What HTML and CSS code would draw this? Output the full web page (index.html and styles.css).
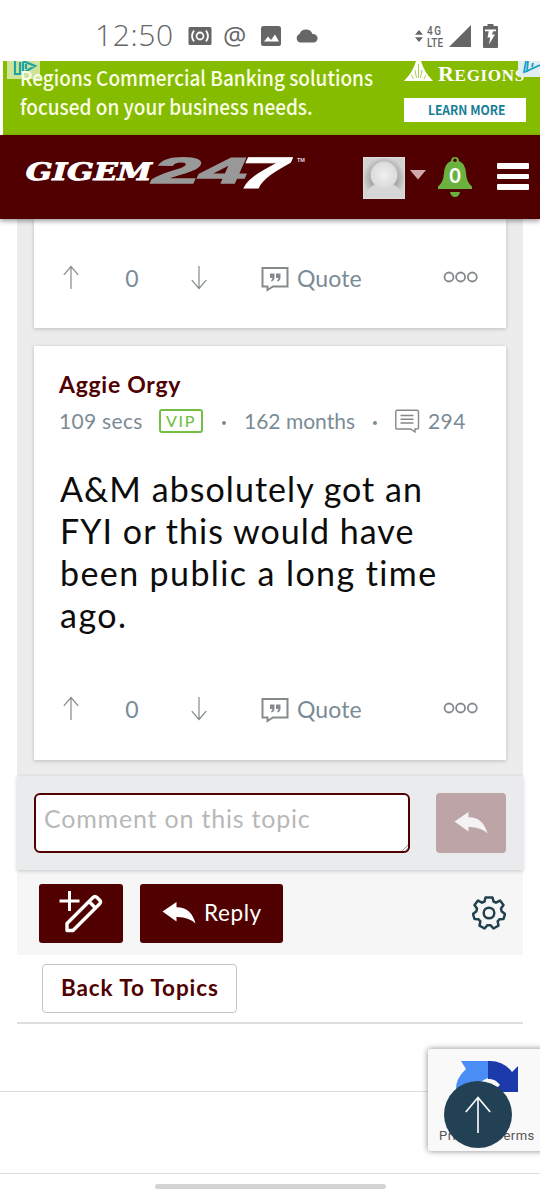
FILE: index.html
```html
<!DOCTYPE html>
<html lang="en">
<head>
<meta charset="utf-8">
<title>Gigem247</title>
<link rel="stylesheet" href="styles.css">
</head>
<body>
<svg class="defs" width="0" height="0">
  <symbol id="up" viewBox="0 0 16 25"><path d="M8 24V1.500M.8 9.800L8 1.500l7.200 8.300" fill="none" stroke="currentColor" stroke-width="1.200"/></symbol>
  <symbol id="quote" viewBox="0 0 28 26"><path d="M1.500 2h25v18.500H12L6.500 24v-3.500h-5z" fill="none" stroke="currentColor" stroke-width="2"/><path d="M9 7.500h4.500v4q0 3.500-3.300 4v-1.500q1.300-.7 1.200-2H9zM15 7.500h4.500v4q0 3.500-3.300 4v-1.500q1.300-.7 1.200-2H15z" fill="currentColor"/></symbol>
  <symbol id="more" viewBox="0 0 36 12"><g fill="none" stroke="currentColor" stroke-width="1.800"><circle cx="6" cy="6" r="4.500"/><circle cx="17.600" cy="6" r="4.500"/><circle cx="29.300" cy="6" r="4.500"/></g></symbol>
  <symbol id="reply" viewBox="0 0 34 24"><path d="M.5 10.500L14.500 1v5.300Q29 6 33.500 22.500 26 15.500 14.500 16v4.500z" fill="currentColor"/></symbol>
</svg>

<header class="status">
  <span class="time">12:50</span>
  <svg class="i-cast" viewBox="0 0 24 18" width="24" height="18"><rect x=".5" width="23" height="18" rx="1.500" fill="#666"/><g fill="none" stroke="#fff" stroke-width="1.800"><circle cx="12" cy="9" r="3.500"/><path d="M6 3.500q-4 5.500 0 11M18 3.500q4 5.500 0 11"/></g></svg>
  <span class="at">@</span>
  <svg class="i-pic" viewBox="0 0 20 20" width="20" height="20"><rect width="20" height="20" rx="2.500" fill="#666"/><path d="M3 15.500l4-5 3 3.500 4-5.500 4 7z" fill="#fff"/></svg>
  <svg class="i-cloud" viewBox="0 0 24 14" width="24" height="14"><path d="M5 13.500a4.500 4.500 0 0 1-.5-8.500A7 7 0 0 1 17.500 5a4.300 4.300 0 0 1 1.500 8.500z" fill="#666"/></svg>
  <span class="grow"></span>
  <svg class="i-ud" viewBox="0 0 8 12" width="8" height="12"><path d="M0 4.700L4 0l4 4.700zM0 7.300h8L4 12z" fill="#666"/></svg>
  <span class="lte"><span class="gen">4G</span><span>LTE</span></span>
  <svg class="i-sig" viewBox="0 0 22 22" width="22" height="22"><path d="M0 22L22 0v22z" fill="#666"/></svg>
  <svg class="i-bat" viewBox="0 0 15 24" width="15" height="24"><path d="M4.500 0h6v2H14q1 0 1 1v20q0 1-1 1H1q-1 0-1-1V3q0-1 1-1h3.500z" fill="#666"/><path d="M2 5.500h11v1.700H2zM6 6h4.500L9 10.500h3L6 20.500 7.200 13.500H4.500z" fill="#fff"/></svg>
</header>

<section class="ad">
  <div class="ad-copy">
    <svg class="adchoice left" viewBox="0 0 33 18" width="33" height="18"><path d="M0 0h33v18H0z" fill="#fff" opacity=".6"/><path d="M8 0v13h5V1M16 0l12 5-12 7V1M19 3v5" fill="none" stroke="#20a3a5" stroke-width="2.200"/></svg>
    <div class="ad-line">Regions Commercial Banking solutions</div>
    <div class="ad-line">focused on your business needs.</div>
  </div>
  <div class="ad-brand">
    <div class="regions">
      <svg viewBox="0 0 30 21" width="30" height="21"><path d="M0 20Q9 11 12 0h5Q20 11 29 20z" fill="#fff"/><path d="M12.500 17L11 9M14.500 17V3M16.500 17L18 9M9.500 18l-2-4M20 18l2-4" stroke="#86bc00" stroke-width=".7" fill="none"/></svg>
      <span class="r-name">R<small>EGIONS</small></span>
    </div>
    <div class="learn"><span>LEARN MORE</span></div>
  </div>
  <svg class="adchoice right" viewBox="0 0 22 16" width="22" height="16"><path d="M0 0h22v16H0z" fill="#e3edf0"/><path d="M8 0L6 11l4-1M10 0L9 10l13-6M15 2l-1 4" fill="none" stroke="#16a0c5" stroke-width="1.800"/></svg>
</section>

<nav class="bar">
  <svg class="logo" viewBox="0 0 290 52" width="290" height="52">
    <g transform="skewX(-15)" font-family="DejaVu Serif" font-weight="bold" stroke-width=".9">
      <text x="7" y="27.500" font-size="24" textLength="126" lengthAdjust="spacingAndGlyphs" fill="#fff" stroke="#fff">GIGEM</text>
    </g>
    <g transform="skewX(-24)" font-family="Liberation Sans" font-weight="bold">
      <text x="138" y="30" font-size="36" textLength="93" lengthAdjust="spacingAndGlyphs" fill="#999" stroke="#999" stroke-width="1.500">24</text>
      <text x="223" y="35" font-size="44" textLength="51" lengthAdjust="spacingAndGlyphs" fill="#fff" stroke="#fff" stroke-width="1">7</text>
    </g>
    <text x="273" y="9" font-family="Liberation Sans" font-size="5.500" font-weight="bold" fill="#e5d5d5">TM</text>
  </svg>
  <svg class="avatar" viewBox="0 0 42 42" width="42" height="42">
    <defs><radialGradient id="bg"><stop offset=".5" stop-color="#999"/><stop offset="1" stop-color="#d2d2d2"/></radialGradient><radialGradient id="hd"><stop offset="0" stop-color="#f0f0f0"/><stop offset="1" stop-color="#dadada"/></radialGradient></defs>
    <path d="M0 0h42v42H0z" fill="url(#bg)"/><path d="M2 42Q4 26 21 26T40 42z" fill="#d6d6d6"/><circle cx="21" cy="18" r="13.500" fill="url(#hd)"/><path d="M.5.500h41v41H.5z" fill="none" stroke="#ddd"/>
  </svg>
  <svg class="caret" viewBox="0 0 16 10" width="16" height="10"><path d="M0 0h16L8 9.500z" fill="#d0a9ab"/></svg>
  <div class="bell">
    <svg viewBox="0 0 34 42" width="34" height="42"><path d="M13 5a4 4 0 0 1 8 0Q27.500 7.500 28 17q.3 9 6 13.500V33H0v-2.500Q5.700 26 6 17 6.500 7.500 13 5zM12 36h10q-1 5-5 5t-5-5z" fill="#6ab13e"/><circle cx="17" cy="4.300" r="1.700" fill="#500000"/></svg>
    <b>0</b>
  </div>
  <div class="menu"><i></i><i></i><i></i></div>
</nav>

<main class="thread">
  <article class="card first">
    <div class="actions">
      <svg class="up"><use href="#up"/></svg><span class="num">0</span><svg class="down"><use href="#up"/></svg><svg class="q"><use href="#quote"/></svg><span class="qt">Quote</span><svg class="more"><use href="#more"/></svg>
    </div>
  </article>
  <article class="card second">
    <h2 class="author">Aggie Orgy</h2>
    <div class="meta">
      <span class="ago">109 secs</span><span class="vip">VIP</span><i class="dot d1"></i><span class="months">162 months</span><i class="dot d2"></i>
      <svg class="posts" viewBox="0 0 25 25" width="25" height="25"><path d="M2 1.200h20q1.500 0 1.500 1.500V19q0 1-1.500 1h-2v3L15.500 20H2q-1.200 0-1.200-1.200V2.500Q.8 1.200 2 1.200zM5.500 6.500h13M5.500 10.300h13M5.500 14h13" fill="none" stroke="#888" stroke-width="1.400"/></svg>
      <span class="count">294</span>
    </div>
    <p class="text"><span class="t1">A&amp;M absolutely got an</span><br><span class="t2">FYI or this would have</span><br><span class="t3">been public a long time</span><br><span class="t4">ago.</span></p>
    <div class="actions">
      <svg class="up"><use href="#up"/></svg><span class="num">0</span><svg class="down"><use href="#up"/></svg><svg class="q"><use href="#quote"/></svg><span class="qt">Quote</span><svg class="more"><use href="#more"/></svg>
    </div>
  </article>
</main>

<section class="comment">
  <div class="field"><span>Comment on this topic</span>
    <svg class="grip" viewBox="0 0 6 6" width="6" height="6"><path d="M0 6l6-6M3 6l3-3" stroke="#999"/></svg></div>
  <div class="send"><svg width="34" height="24"><use href="#reply"/></svg></div>
</section>

<section class="tools">
  <div class="btn edit"><svg viewBox="0 0 46 44" width="46" height="44" fill="none" stroke="#fff"><path d="M11.500 2v20M1.500 12h20" stroke-width="3"/><path d="M9 34.500L35 8.500q2-2 4 0l2.500 2.500q2 2 0 4L15 41.500H9zM31 12.500l6 6" stroke-width="3.400" stroke-linejoin="round"/></svg></div>
  <div class="btn reply"><svg width="34" height="24"><use href="#reply"/></svg><span>Reply</span></div>
  <svg class="gear" viewBox="-17 -17 34 34" width="34" height="34" fill="none" stroke="#23404f" stroke-width="2.500" stroke-linejoin="round"><circle r="5.300"/><path d="M-3.500 -15.500H3.500L4.500-11.500 7-10.300 11-12.400 14.500-7.900 12-4.600 12.600-1.800 16 1 14.500 6 10.500 6.200 8.700 8.400 9.500 12.700 4.500 15.500 1.500 12.200H-1.500L-4.500 15.500-9.500 12.700-8.700 8.400-10.500 6.200-14.500 6-16 1-12.600-1.800-12-4.600-14.500-7.900-11-12.400-7-10.300-4.500-11.500Z"/></svg>
</section>

<section class="back"><div class="back-btn"><span>Back To Topics</span></div></section>
<div class="rule"></div>
<div class="rule low"></div>
<div class="pill"></div>

<aside class="captcha">
  <svg viewBox="0 0 64 60" width="64" height="60"><path d="M6 2h27v17Q24 22 17 32H1Q0 20 11 10z" fill="#4a8df5"/><path d="M33 2Q48 1 57 13l6-6v26H37l8-7q-5-7-12-6z" fill="#1c3aa9"/></svg>
  <span>Privacy - Terms</span>
</aside>
<div class="totop"><svg viewBox="0 0 26 37" width="26" height="37"><path d="M13 37V1.500M.8 16L13 1.500 25.200 16" fill="none" stroke="#fff" stroke-width="1.600"/></svg></div>
</body>
</html>
```
FILE: styles.css
```css
* { box-sizing: border-box; }
body { margin: 0; width: 540px; height: 1200px; overflow: hidden; position: relative; background: #fff; font-family: Lato, "Open Sans", sans-serif; }
svg { display: block; flex: none; }
span { white-space: nowrap; }
.defs { position: absolute; }
.grow { flex: 1; }

.status { height: 61px; display: flex; align-items: center; padding: 11px 42px 0 95px; color: #666; }
.time { width: 93px; font: 300 30px/38px "Open Sans", sans-serif; letter-spacing: .6px; padding-bottom: 2px; }
.at { font: 400 26px/30px "Open Sans", sans-serif; margin-left: 11px; width: 38px; padding-bottom: 2px; }
.i-cloud { margin-left: 14px; }
.lte { font: 500 13.500px/12px Roboto, sans-serif; margin: 0 4px; width: 18px; display: grid; transform: scaleX(.74); transform-origin: left; }
.lte .gen { letter-spacing: 2px; }
.lte span + span { letter-spacing: .2px; }
.i-bat { margin-left: 12px; }

.ad { height: 74px; margin-left: 3px; background: #86bc00; color: #fff; display: flex; position: relative; overflow: hidden; }
.ad-copy { width: 401px; padding: 2px 0 0 17px; }
.ad-line { font: 500 20.500px/29px "Noto Sans CJK SC", sans-serif; white-space: nowrap; color: #fbffe9; transform: scaleX(.926); transform-origin: left; }
.adchoice { position: absolute; top: 0; }
.adchoice.left { left: 4px; }
.adchoice.right { right: 0; }
.regions { display: flex; height: 37px; gap: 4px; }
.r-name { font: 700 22px/25px "Liberation Serif", serif; letter-spacing: .7px; }
.r-name small { font-size: 17px; }
.learn { width: 122px; height: 24px; background: #fff; color: #187e96; font: 700 13px/24px "Noto Sans CJK SC", sans-serif; text-align: center; }
.learn span { display: inline-block; transform: translateX(2px) scaleX(.93); }

.bar { height: 84px; background: #500000; display: flex; align-items: flex-start; position: relative; z-index: 2; padding-left: 24px; box-shadow: 0 2px 5px rgba(0,0,0,.4); }
.logo { margin-top: 18px; overflow: visible; }
.avatar { margin: 22px 0 0 49px; }
.caret { margin: 35px 0 0 5px; }
.bell { position: relative; margin: 21px 0 0 12px; }
.bell b { position: absolute; inset: 7px 0 auto; text-align: center; color: #fff; font: 700 20px/24px Lato, sans-serif; }
.menu { margin: 28px 0 0 25px; width: 32px; display: grid; gap: 5px; }
.menu i { height: 5.600px; border-radius: 1px; background: #fff; }

.thread { margin: 0 17px; width: 506px; height: 557px; background: #ececec; padding: 0 17px; }
.card { width: 472px; background: #fff; box-shadow: 0 1px 4px rgba(0,0,0,.2); }
.first { height: 109px; padding-top: 45px; }
.second { height: 414px; margin-top: 18px; padding-top: 24px; }
.actions { display: flex; align-items: flex-start; height: 28px; color: #858a8d; }
.actions .up, .actions .down { width: 16px; height: 25px; margin: 1px 0 0 29px; }
.actions .down { transform: rotate(180deg); margin-left: 50px; }
.num, .qt { color: #7b8b96; font-size: 23px; line-height: 28px; }
.num { width: 18px; text-align: center; margin-left: 44px; }
.q { width: 28px; height: 26px; margin: 2px 0 0 54px; }
.qt { width: 66px; margin-left: 8px; letter-spacing: .1px; }
.more { width: 36px; height: 12px; margin: 7px 0 0 80px; }

.author { margin: 0 0 0 25px; font-size: 23px; line-height: 28px; letter-spacing: .7px; color: #500000; }
.meta { display: flex; align-items: center; height: 26px; margin: 10px 0 0 25px; color: #7b8b96; font-size: 21px; line-height: 26px; }
.ago { width: 100px; letter-spacing: .3px; }
.vip { width: 44px; height: 24px; border: 2px solid #72bf44; border-radius: 3px; color: #72bf44; font: 500 16px/20px Lato, sans-serif; letter-spacing: 1.600px; text-align: center; }
.dot { width: 4px; height: 4px; border-radius: 50%; background: #7b8b96; }
.d1 { margin: 3px 18px 0 19px; }
.months { width: 111px; }
.d2 { margin: 3px 18px 0 18px; }
.count { margin-left: 8px; letter-spacing: .4px; }
.text { margin: 34px 0 0 26px; font-size: 34px; line-height: 42px; letter-spacing: 1.500px; color: #0c0c0c; }
.t1, .t2 { letter-spacing: 1.050px; }
.t3 { letter-spacing: 1.400px; }
.second .actions { margin-top: 59px; }

.comment { position: relative; margin: 0 17px; width: 506px; height: 94px; background: #e9ebec; box-shadow: 0 1px 4px rgba(0,0,0,.2); display: flex; padding: 17px 17px 0; gap: 26px; }
.field { position: relative; width: 376px; height: 60px; background: #fff; border: 2px solid #500000; border-radius: 6px; color: #b8b8b8; font-size: 25px; line-height: 30px; padding: 8px 8px; letter-spacing: .800px; }
.grip { position: absolute; right: 0; bottom: 0; }
.send { width: 70px; height: 60px; border-radius: 4px; background: #bda4a6; color: #f4f2f2; display: grid; place-items: center; }
.tools { margin: 0 17px; width: 506px; height: 85px; background: #f6f6f6; display: flex; align-items: flex-start; padding: 14px 0 0 22px; color: #fff; }
.btn { height: 59px; border-radius: 3px; background: #500000; display: flex; }
.edit { width: 84px; padding: 5px 0 0 19px; }
.btn.reply { width: 143px; margin-left: 17px; padding: 17px 0 0 22px; }
.btn.reply span { font-size: 22.500px; line-height: 23px; margin-left: 8px; letter-spacing: .600px; }
.gear { margin: 12px 0 0 189px; }
.back { margin: 0 17px; width: 506px; height: 69px; border-bottom: 2px solid #dedede; padding: 9px 0 0 25px; }
.back-btn { width: 195px; height: 49px; border: 1px solid #c4c4c4; border-radius: 4px; padding-left: 18px; color: #500000; font-weight: 700; font-size: 22.500px; line-height: 46px; letter-spacing: .900px; }
.rule { height: 68px; border-bottom: 1.500px solid #ddd; }
.rule.low { height: 82px; }
.pill { width: 231px; height: 5px; border-radius: 3px; margin: 10px auto 0; background: #d4d4d4; }

.captcha { position: absolute; left: 428px; top: 1049px; width: 130px; height: 102px; background: #f9f9f9; border-radius: 3px; box-shadow: 0 0 6px #888; padding: 10px 0 0 27px; }
.captcha span { position: absolute; left: 11px; top: 79px; font: 400 13px/16px Roboto, sans-serif; letter-spacing: .5px; color: #555; }
.totop { position: absolute; left: 444px; top: 1081px; width: 68px; height: 67px; border-radius: 50%; background: #234154; display: grid; place-items: center; }
```
